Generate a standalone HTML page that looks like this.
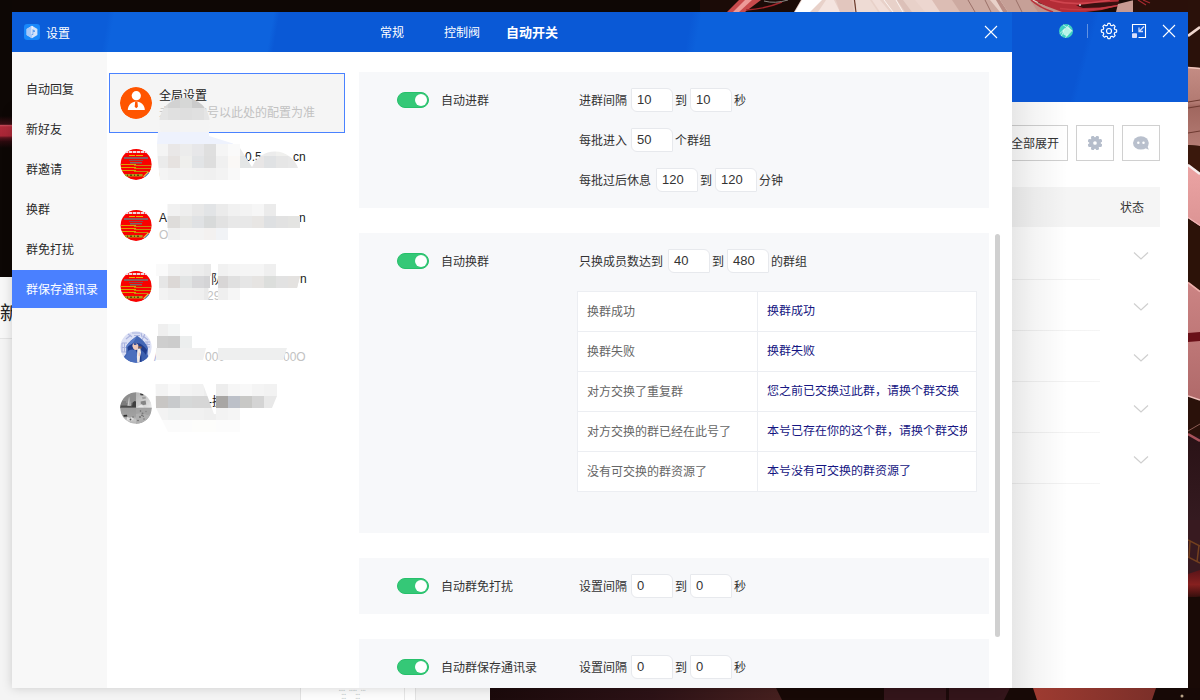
<!DOCTYPE html>
<html lang="zh-CN">
<head>
<meta charset="utf-8">
<title>设置</title>
<style>
*{box-sizing:border-box;margin:0;padding:0}
html,body{width:1200px;height:700px;overflow:hidden}
body{position:relative;background:#150906;font-family:"Liberation Sans","Noto Sans CJK SC",sans-serif;font-size:12px;color:#333;line-height:1}
.abs{position:absolute}
/* ---------- wallpaper ---------- */
#wp-top{left:0;top:0;width:1200px;height:12px;background:#120806}
#wp-right{left:1188px;top:0}
#wp-bottom{left:490px;top:688px;width:710px;height:12px}
#wp-left{left:0;top:0;width:12px;height:277px;background:#0d0705}
/* ---------- back-left window ---------- */
#bl{left:0;top:277px;width:490px;height:423px;background:#f4f4f4}
/* ---------- back main window ---------- */
#bw{left:900px;top:12px;width:288px;height:676px;background:#fff}
#bw .hd{left:0;top:0;width:288px;height:90px;background:linear-gradient(105deg,#0a56d3 0,#0a56d3 62%,#0b5bd8 64%,#0b5bd8 100%)}
.btn{position:absolute;top:113px;height:36px;border:1px solid #d0d0d0;background:#fff}
/* ---------- settings window ---------- */
#sw{left:12px;top:12px;width:1000px;height:676px;background:#fff}
#swsh{left:12px;top:110px;width:985px;height:578px;box-shadow:0 0 10px rgba(0,0,0,.17)}
#sw .tb{left:0;top:0;width:1000px;height:40px;background:linear-gradient(100deg,#0b5dd9 0,#0b5dd9 9.600%,#0d63de 10.200%,#0d63de 26%,#0a59d6 26.600%,#0a59d6 67.500%,#0c61dc 68.500%,#0c61dc 100%);color:#fff}
#side{left:0;top:40px;width:95px;height:636px;background:#f8f8f8}
.si{position:absolute;left:0;width:95px;height:38px;line-height:40px;padding-left:14px;color:#2a2a2a;white-space:nowrap}
.si.on{background:#4a80ff;color:#fff}
.acc{position:absolute;left:97px;width:236px;height:60px}
.acc.on{background:#f5f5f5;border:1px solid #4a82ff}
.av{position:absolute;left:108px;width:32px;height:32px;border-radius:50%;overflow:hidden}
.nm{position:absolute;left:147px;white-space:nowrap;color:#222;line-height:14px;margin-top:1px}
.sb{position:absolute;left:147px;white-space:nowrap;color:#c2c2c2;line-height:14px;margin-top:1px}
.card{position:absolute;left:347px;width:630px;background:#f7f8fa}
.tg{position:absolute;left:385px;width:32px;height:16px;border-radius:8px;background:#35c877;border:1px solid #27c06b}
.tg:after{content:"";position:absolute;right:1px;top:1px;width:12px;height:12px;border-radius:50%;background:#fff}
.lb{position:absolute;left:429px;white-space:nowrap;color:#333;line-height:16px;margin-top:1px}
.tx{position:absolute;white-space:nowrap;color:#333;line-height:16px;margin-top:1px}
.in{position:absolute;width:42px;height:24px;border:1px solid #e7e9ed;border-radius:1px 6px 1px 6px;background:#fff;line-height:22px;padding-left:5px;color:#333;font-size:13px}
#tbl{border-collapse:collapse;background:#fff;table-layout:fixed;width:400px}
#tbl td{height:40px;border:1px solid #eceef2;padding:0 0 0 9px;color:#666;white-space:nowrap;overflow:hidden;vertical-align:middle}
#tbl td:first-child{width:180px}
#tbl td span{display:block;width:200px;overflow:hidden;color:#161682;white-space:nowrap;position:relative;top:-1px}
</style>
</head>
<body>
<!-- wallpaper -->
<svg id="wp-top" class="abs" width="1200" height="12" viewBox="0 0 1200 12">
<rect width="1200" height="12" fill="#0e0705"/>
<rect x="700" width="500" height="12" fill="#1b0b07"/>
<polygon points="727,12 739,0 761,0 745,12" fill="#c94a4c"/>
<polygon points="733,12 745,0 752,0 739,12" fill="#ee9a98"/>
<path d="M746 10 Q765 9 782 2" stroke="#a3262c" stroke-width="1.4" fill="none"/>
<path d="M764 1 Q775 4 788 0" stroke="#8c8884" stroke-width="1" fill="none"/>
<polygon points="794,12 801,0 1040,0 1032,12" fill="#e8d1c9"/>
<polygon points="795,12 802,0 822,0 810,12" fill="#ffffff"/>
<polygon points="818,12 826,0 834,0 840,12" fill="#f4e4df"/>
<polygon points="840,12 836,0 852,0 854,12" fill="#e2c6be"/><path d="M854.500 0L856 12" stroke="#6a3a2c" stroke-width="1.200"/><polygon points="857,12 855.500,0 870,0 878,12" fill="#eedbd4"/>
<polygon points="880,12 872,0 880,0 890,12" fill="#f1ded8"/>
<polygon points="905,12 897,0 903,0 912,12" fill="#dcc0b8"/><path d="M884 0L893 12M896 0L903 12" stroke="#fbf3f0" stroke-width="1"/>
<polygon points="925,12 915,0 935,0 947,12" fill="#ecd6cf"/>
<polygon points="940,12 932,0 955,0 964,12" fill="#dcbdb4"/>
<polygon points="960,12 952,0 990,0 1000,12" fill="#cdaaa1"/><path d="M968 0l7 12M985 0l6 12" stroke="#9a7068" stroke-width="1"/>
<polygon points="1003,12 996,0 1000,0 1008,12" fill="#b98d85"/>
<polygon points="1008,12 1000,0 1032,0 1040,12" fill="#c6a097"/><path d="M1016 0l6 12" stroke="#9a7068" stroke-width="1"/>
<polygon points="1030,0 1066,12 1038,12" fill="#c29289"/>
<polygon points="1034,0 1119,0 1117,6 1102,10 1086,12 1062,12 1046,6" fill="#b32c36"/>
<path d="M1031 0 Q1040 8 1053 12" stroke="#b9323b" stroke-width="1.600" fill="none"/>
<path d="M1050 0 Q1075 7 1110 0" stroke="#cf444e" stroke-width="1.600" fill="none"/>
<polygon points="1076,5.500 1095,3 1119,1.500 1118,5 1100,7.500 1083,8" fill="#3a1010"/>
<path d="M1060 8.500 Q1090 12 1118 5.500" stroke="#c43a44" stroke-width="1.600" fill="none"/>
<circle cx="1080" cy="5" r=".9" fill="#f2e2e2"/>
<polygon points="1116,12 1118,4 1134,0 1134,12" fill="#c79a92"/>
<rect x="1133" width="67" height="12" fill="#2a100a"/>
<path d="M1138 0 L1146 5 M1143 0 L1150 3" stroke="#a52a30" stroke-width="1.2"/>
</svg>
<svg id="wp-right" class="abs" width="12" height="700" viewBox="1188 0 12 700">
<defs>
<linearGradient id="r1" x1="0" y1="0" x2="0" y2="1"><stop offset="0" stop-color="#c48c84"/><stop offset=".45" stop-color="#b27a72"/><stop offset=".5" stop-color="#a0665e"/><stop offset="1" stop-color="#b47c74"/></linearGradient>
<linearGradient id="r2" x1="0" y1="0" x2="0" y2="1"><stop offset="0" stop-color="#eca4a4"/><stop offset="1" stop-color="#dc9494"/></linearGradient>
<linearGradient id="r3" x1="0" y1="0" x2="0" y2="1"><stop offset="0" stop-color="#cc8484"/><stop offset="1" stop-color="#b06a6a"/></linearGradient>
<linearGradient id="r4" x1="0" y1="0" x2="0" y2="1"><stop offset="0" stop-color="#2a1216"/><stop offset="1" stop-color="#361c22"/></linearGradient>
<linearGradient id="r5" x1="0" y1="0" x2="0" y2="1"><stop offset="0" stop-color="#5a1418"/><stop offset=".5" stop-color="#86201f"/><stop offset="1" stop-color="#2a0c0a"/></linearGradient>
</defs>
<rect x="1188" y="0" width="12" height="700" fill="#2a110a"/>
<path d="M1188 36L1200 27" stroke="#efd6ce" stroke-width="2.600"/>
<polygon points="1188,67 1200,68 1200,146 1188,145" fill="url(#r1)"/>
<path d="M1188 67.500L1200 68.500" stroke="#f0c4bc" stroke-width="1.400"/>
<path d="M1188 102L1200 100M1188 108L1200 106M1188 133L1200 131" stroke="#6e3a30" stroke-width="1"/>
<polygon points="1188,145 1200,146 1200,173 1188,164" fill="#3a180c"/>
<polygon points="1188,164 1200,173 1200,226 1188,218" fill="url(#r2)"/>
<path d="M1188 165L1200 174" stroke="#f6eeee" stroke-width="2.400"/>
<path d="M1188 217.500L1200 225.500" stroke="#f0b4b4" stroke-width="1.400"/>
<polygon points="1188,219 1200,227 1200,291 1188,282" fill="#2c1208"/>
<polygon points="1188,282 1200,291 1200,400 1188,396" fill="url(#r3)"/>
<path d="M1188 282.500L1200 291.500" stroke="#eeb0ac" stroke-width="1.600"/>
<polygon points="1188,333 1200,332 1200,341 1188,342" fill="#6a1018"/>
<path d="M1188 396L1200 400" stroke="#f0c0bc" stroke-width="1.600"/>
<rect x="1188" y="436" width="12" height="100" fill="url(#r4)"/>
<path d="M1188 431L1200 424" stroke="#8c5c54" stroke-width="1"/>
<path d="M1188 434L1200 441" stroke="#a8525a" stroke-width="2.400"/>
<rect x="1188" y="520" width="12" height="54" fill="#381a20"/>
<path d="M1188 540L1200 546M1188 557L1200 563M1190 541L1189 558M1199 545L1197 562" stroke="#74401f" stroke-width="1.500"/>
<polygon points="1188,574 1200,570 1200,596 1188,599" fill="url(#r5)"/>
<rect x="1188" y="597" width="12" height="103" fill="#190a06"/>
</svg>
<svg id="wp-bottom" class="abs" width="710" height="12" viewBox="490 688 710 12">
<defs><linearGradient id="gb1" x1="0" x2="1"><stop offset="0" stop-color="#1b0a0b"/><stop offset=".55" stop-color="#2c1216"/><stop offset="1" stop-color="#46201f"/></linearGradient>
<linearGradient id="gb2" x1="0" x2="1"><stop offset="0" stop-color="#9e3b31"/><stop offset="1" stop-color="#7b2f29"/></linearGradient></defs>
<rect x="490" y="688" width="710" height="12" fill="#170906"/>
<polygon points="490,688 776,688 782,700 490,700" fill="url(#gb1)"/>
<polygon points="884,688 1010,688 1004,700 884,700" fill="#33151a"/>
<rect x="946" y="688" width="3" height="12" fill="#1c0a0a"/>
<polygon points="1033,688 1156,688 1152,700 1037,700" fill="url(#gb2)"/>
<circle cx="1182" cy="696" r="1.5" fill="#b9a488"/>
</svg>
<div id="wp-left" class="abs"><div class="abs" style="left:0;top:116px;width:12px;height:32px;background:linear-gradient(#0d0705,#3a0e14 26%,#c44a58 29%,#b02a3a 34%,#a82636 62%,#5a141e 68%,#2a0a0e 80%,#0d0705)"></div></div>
<!-- back-left window -->
<div id="bl" class="abs">
<div class="abs" style="left:0;top:0;width:12px;height:62px;background:#f7f7f7"></div>
<div class="abs" style="left:0;top:61px;width:12px;height:1px;background:#e3e3e3"></div>
<div class="abs" style="left:0;top:26px;font-size:19px;line-height:22px;color:#222;width:12px;overflow:hidden;white-space:nowrap">新建</div>
<div class="abs" style="left:300px;top:411px;width:116px;height:12px;background:#fcfcfc;border-left:1px solid #e2e2e2;border-right:1px solid #e2e2e2"></div>
<div class="abs" style="left:404px;top:411px;width:1px;height:12px;background:#e6e6e6"></div>
<div class="abs" style="left:339px;top:411px;font-size:3px;line-height:4px;color:#9aa;white-space:pre;letter-spacing:.5px">▪▪▪▪   ▪▪▪▪▪   ▪▪▪
  ▪▪▪       ▪▪▪
  ▪▪▪       ▪▪▪</div>
</div>
<!-- back main window -->
<div id="bw" class="abs">
<div class="hd abs"></div>
<!-- header icons -->
<svg class="abs" style="left:158px;top:11px" width="16" height="16" viewBox="0 0 16 16"><circle cx="8" cy="8" r="7" fill="#3fcfc1"/><polygon points="4.500,7.500 10.500,3.500 14,8 9,13.500 5.500,11.500" fill="#b6f3e7"/><path d="M1.800 10.500L11 2.200M5 1.800L14.500 8M3.500 13L6.500 5.500M7.500 14.800L9.500 11" stroke="#e2fbf5" stroke-width=".8" fill="none" opacity=".9"/></svg>
<div class="abs" style="left:187px;top:12px;width:1px;height:14px;background:rgba(255,255,255,.36)"></div>
<svg class="abs" style="left:200px;top:10px" width="18" height="18" viewBox="0 0 18 18" fill="none" stroke="#fff" stroke-width="1.150" stroke-linejoin="round"><path d="M7.450 3.200 L7.930 1.370 L10.070 1.370 L10.550 3.200 L12 3.800 L13.630 2.850 L15.150 4.370 L14.200 6 L14.800 7.450 L16.630 7.930 L16.630 10.070 L14.800 10.550 L14.200 12 L15.150 13.630 L13.630 15.150 L12 14.200 L10.550 14.800 L10.070 16.630 L7.930 16.630 L7.450 14.800 L6 14.200 L4.370 15.150 L2.850 13.630 L3.800 12 L3.200 10.550 L1.370 10.070 L1.370 7.930 L3.200 7.450 L3.800 6 L2.850 4.370 L4.370 2.850 L6 3.800Z"/><circle cx="9" cy="9" r="2.500"/></svg>
<svg class="abs" style="left:231px;top:11px" width="16" height="16" viewBox="0 0 16 16" fill="none" stroke="#fff" stroke-width="1.100"><path d="M1.500 9V1.500h13v13H7.500"/><path d="M13 3.500L8.500 8M8 4.500v4h4" stroke="#d3dcfb" stroke-width="1.300"/><rect x="1" y="10.200" width="5" height="4.800" fill="#d9defb" stroke="none" rx=".8"/></svg>
<svg class="abs" style="left:262px;top:12px" width="14" height="14" viewBox="0 0 14 14" stroke="#fff" stroke-width="1.100"><path d="M1 1l12 12M13 1L1 13"/></svg>
<!-- toolbar buttons -->
<div class="btn" style="left:92px;width:76px;line-height:36px;padding-left:18px;color:#333;white-space:nowrap">全部展开</div>
<div class="btn" style="left:176px;width:38px"><svg class="abs" style="left:11px;top:10px" width="14" height="14" viewBox="0 0 16 16"><path fill="#b5bdcb" stroke="#b5bdcb" stroke-width="1.200" stroke-linejoin="round" d="M8.89 2.07 L9.98 0.35 L12.01 1.19 L11.57 3.18 L12.82 4.43 L14.81 3.99 L15.65 6.02 L13.93 7.11 L13.93 8.89 L15.65 9.98 L14.81 12.01 L12.82 11.57 L11.57 12.82 L12.01 14.81 L9.98 15.65 L8.89 13.93 L7.11 13.93 L6.02 15.65 L3.99 14.81 L4.43 12.82 L3.18 11.57 L1.19 12.01 L0.35 9.98 L2.07 8.89 L2.07 7.11 L0.35 6.02 L1.19 3.99 L3.18 4.43 L4.43 3.18 L3.99 1.19 L6.02 0.35 L7.11 2.07Z"/><circle cx="8" cy="8" r="2.100" fill="#fff"/></svg></div>
<div class="btn" style="left:222px;width:38px"><svg class="abs" style="left:9px;top:9px" width="18" height="16" viewBox="0 0 18 16"><ellipse cx="8.900" cy="7.900" rx="7.900" ry="6.700" fill="#b9c0cd"/><path fill="#b9c0cd" d="M12 12.500l4.800 2.300-1.600-4.300z"/><circle cx="6.300" cy="7.800" r="1.250" fill="#fff"/><circle cx="11.500" cy="7.800" r="1.250" fill="#fff"/></svg></div>
<!-- table -->
<div class="abs" style="left:112px;top:175px;width:148px;height:40px;background:#f5f5f5"></div>
<div class="abs" style="left:220px;top:189px;line-height:14px;color:#333">状态</div>
<div class="abs" style="left:112px;top:267px;width:88px;height:1px;background:linear-gradient(to right,#efefef,#f5f5f5)"></div>
<div class="abs" style="left:112px;top:318px;width:88px;height:1px;background:linear-gradient(to right,#efefef,#f5f5f5)"></div>
<div class="abs" style="left:112px;top:369px;width:88px;height:1px;background:linear-gradient(to right,#efefef,#f5f5f5)"></div>
<div class="abs" style="left:112px;top:420px;width:88px;height:1px;background:linear-gradient(to right,#efefef,#f5f5f5)"></div>
<div class="abs" style="left:112px;top:471px;width:88px;height:1px;background:linear-gradient(to right,#efefef,#f5f5f5)"></div>
<svg class="abs" style="left:233px;top:239px" width="16" height="220" viewBox="0 0 16 220" fill="none" stroke="#cfcfcf" stroke-width="1.200"><path d="M1 1.500l7 6.500 7-6.500M1 52.500l7 6.500 7-6.500M1 103.500l7 6.500 7-6.500M1 154.500l7 6.500 7-6.500M1 205.500l7 6.500 7-6.500"/></svg>
<div class="abs" style="left:112px;top:90px;width:56px;height:586px;background:linear-gradient(to right,rgba(0,0,0,.095),rgba(0,0,0,.045) 40%,rgba(0,0,0,0))"></div>
</div>
<!-- settings window -->
<div id="swsh" class="abs"></div>
<div id="sw" class="abs" style="overflow:hidden">
<div class="tb abs">
<svg class="abs" style="left:12px;top:12px" width="16" height="16" viewBox="0 0 16 16"><rect width="16" height="16" rx="3.200" fill="#1889fb"/><polygon points="8,1.800 13.400,4.900 13.400,11.100 8,14.200 2.600,11.100 2.600,4.900" fill="#d3e4fb"/><polygon points="8,1.800 8,14.200 2.600,11.100 2.600,4.900" fill="#a9c9f7"/><polygon points="8,5 11,6.500 11,8 9.300,8 9.300,10.500 8,11.200" fill="#5f9ff0"/><path d="M8 2v8" stroke="#fff" stroke-width=".9"/></svg>
<div class="abs" style="left:34px;top:14px;line-height:16px;white-space:nowrap">设置</div>
<div class="abs" style="left:368px;top:13px;line-height:16px;white-space:nowrap">常规</div>
<div class="abs" style="left:432px;top:13px;line-height:16px;white-space:nowrap">控制阀</div>
<div class="abs" style="left:494px;top:13px;line-height:16px;white-space:nowrap;font-size:13px;font-weight:bold">自动开关</div>
<svg class="abs" style="left:972px;top:13px" width="14" height="14" viewBox="0 0 14 14" stroke="#fff" stroke-width="1.100"><path d="M1 1l12 12M13 1L1 13"/></svg>
</div>
<div id="side" class="abs">
<div class="si" style="top:18px">自动回复</div>
<div class="si" style="top:58px">新好友</div>
<div class="si" style="top:98px">群邀请</div>
<div class="si" style="top:138px">换群</div>
<div class="si" style="top:178px">群免打扰</div>
<div class="si on" style="top:218px">群保存通讯录</div>
</div>
<!-- account list -->
<div class="acc on" style="top:61px"></div>
<svg class="av" style="top:75px" width="32" height="32" viewBox="0 0 32 32"><circle cx="16" cy="16" r="16" fill="#ff5500"/><circle cx="16.300" cy="8.700" r="4.600" fill="#fff"/><path d="M7.800 23c0-5 3.800-8.600 8.500-8.600s8.500 3.600 8.500 8.600z" fill="#fff"/><path d="M15.200 14.400h2.200l.5 5.300-1.600 1.500-1.600-1.500z" fill="#ff5500"/></svg>
<div class="nm" style="top:76px">全局设置</div>
<div class="sb" style="top:93px">未设置的号以此处的配置为准</div>

<svg class="av" style="top:136px" width="32" height="32" viewBox="0 0 32 32"><use href="#redav"/></svg>
<div class="nm" style="top:136.500px;left:233px">0.5</div><div class="nm" style="top:136.500px;left:281px">cn</div>
<div class="sb" style="top:154px">C</div>

<svg class="av" style="top:197px" width="32" height="32" viewBox="0 0 32 32"><defs><g id="redav"><circle cx="16.100" cy="16.400" r="15.500" fill="#f90000"/><rect x="5" y="3" width="22" height="2" fill="#efd9e2"/><rect x="8" y="3" width="1" height="2" fill="#f95050"/><rect x="12" y="3" width="1" height="2" fill="#f95050"/><rect x="16" y="3" width="1" height="2" fill="#f95050"/><rect x="20" y="3" width="1" height="2" fill="#f95050"/><rect x="24" y="3" width="1" height="2" fill="#f95050"/><rect x="9" y="7" width="14" height="1" fill="#e9b000"/><rect x="15" y="7" width="1" height="1" fill="#f90000"/><rect x="4" y="9" width="24" height="2" fill="#8a5a5e"/><rect x="9" y="12" width="14" height="1" fill="#8c4a4e"/><rect x="10" y="14" width="12" height="1.500" fill="#77686c"/><rect x="1" y="16" width="15" height="1" fill="#d8a200"/><rect x="14" y="17" width="17" height="1" fill="#c3870c"/><rect x="1" y="19" width="15" height="1" fill="#d8a200"/><rect x="14" y="20" width="17" height="1" fill="#c3870c"/><rect x="2" y="22" width="14" height="1" fill="#d8a200"/><rect x="14" y="23" width="14" height="1" fill="#c3870c"/><rect x="5" y="26" width="17.600" height="2.500" fill="#b09a18"/><rect x="7" y="26.500" width="1" height="1.500" fill="#5a4a10"/><rect x="10" y="26.500" width="2" height="1.500" fill="#5a4a10"/><rect x="14" y="26.500" width="1" height="1.500" fill="#5a4a10"/><rect x="17" y="26.500" width="2" height="1.500" fill="#5a4a10"/><path d="M24 29 L29 24 L29 26 L25.500 29.500 Z" fill="#3a96e4"/><path d="M23 28.500 L28 23.500 L29 24 L24 29 Z" fill="#e8d040"/></g></defs><use href="#redav"/></svg>
<div class="nm" style="top:197.500px">A</div><div class="nm" style="top:197.500px;left:287px">n</div>
<div class="sb" style="top:214.500px">O</div>

<svg class="av" style="top:258px" width="32" height="32" viewBox="0 0 32 32"><use href="#redav"/></svg>
<div class="nm" style="top:260px;left:199px">队</div><div class="nm" style="top:258.500px;left:288px">n</div>
<div class="sb" style="top:275.500px;left:195px">29</div>

<svg class="av" style="top:319px" width="32" height="32" viewBox="0 0 32 32"><defs><clipPath id="cb"><circle cx="16" cy="16" r="15.700"/></clipPath></defs><g clip-path="url(#cb)"><rect width="32" height="32" fill="#dde1f5"/><path d="M2 12h5M2 12v9h5M4.500 12v9M2 16.500h5M8 3l4 3M6 8l5-4M12 2h8M14 4.500h6M21 2l1 4M23 5l5 4M25 3l-3 6M25 11h5M25 13.500h5M27 11v8M24 16h6" stroke="#aab3de" stroke-width="1.100" fill="none"/><path d="M17.100 4.800C21 7.500 26.500 12 28 17.500L27.500 23l3 9H4l-1-5 3.200-4.500L6.300 15C9 11 13.500 7.500 17.100 4.800z" fill="#4467b5"/><path d="M17.100 4.800C15 9 12.500 12.500 10.500 15l-3 1.500L6.300 15C9 11 13.500 7.500 17.100 4.800z" fill="#5b7dc9"/><path d="M7.600 16c2-2 4.500-3.500 7-4l5 .5c3 1.500 6 4 7.500 6.500l-1.500 6-5 7-3-1.500-1-8-5-2.500-3 3z" fill="#203c8c"/><path d="M8.500 19.500c2-1.200 5-1.500 7-.5l1.500 3 .5 10H7l-2-4z" fill="#4c6fbd"/><path d="M21 19c2 1 4.500 3.500 5.500 6l1 7h-6z" fill="#3c5fae"/><path d="M13 12.600c1.500-.5 3.500-.3 5 .8l.6 2.500-1 2.800-2.800.4-1.500-1.600-1-2.500z" fill="#efc9ba"/><path d="M13.300 12.600l2-.6 1.500 1.800-2.500.2z" fill="#2b4796"/><path d="M18.300 15.200l3.400.2-.2 2-3 .2z" fill="#8a5c44"/><path d="M17.400 17.800l3-.3.600 4-1 4.500-.5 5.500-2.300.3-.3-6z" fill="#f3ebe6"/><path d="M18.800 21l1.500 1.500-.5 3-1.200-.5z" fill="#efc9ba"/></g></svg>
<div class="sb" style="top:336.500px;left:142px;color:#a9b0d6">/</div><div class="sb" style="top:336.500px;left:193px">000</div><div class="sb" style="top:336.500px;left:271px">00O</div>

<svg class="av" style="top:380px" width="32" height="32" viewBox="0 0 32 32"><defs><clipPath id="cg"><circle cx="16" cy="16" r="15.800"/></clipPath><linearGradient id="gtr" x1="0" y1="0" x2="1" y2="1"><stop offset="0" stop-color="#b4b4b4"/><stop offset=".6" stop-color="#d2d2d2"/><stop offset="1" stop-color="#ececec"/></linearGradient><linearGradient id="gbl" x1="0" y1="0" x2="0" y2="1"><stop offset="0" stop-color="#9a9a9a"/><stop offset=".55" stop-color="#a2a2a2"/><stop offset=".75" stop-color="#c6c6c6"/><stop offset="1" stop-color="#b0b0b0"/></linearGradient></defs><g clip-path="url(#cg)"><rect width="16" height="16" fill="#8e8e8e"/><rect y="11" width="16" height="3" fill="#7a7a7a"/><rect y="13.600" width="16" height="2.400" fill="#4c4c4c"/><path d="M9.100 4.600L7.400 13.800h3.500z" fill="#c9c9c9"/><path d="M9.100 4.600L9 13.800h1.900z" fill="#a8a8a8"/><path d="M12.600 10.500l2-1.500 1.400.5V15h-4z" fill="#3e3e3e"/><path d="M2 9h4v4H2z" fill="#7c7c7c"/><rect x="16" width="16" height="16" fill="url(#gtr)"/><path d="M20 1.500l3 .3.500 1.800-3-.4z" fill="#3e3e3e"/><path d="M20.600 9.500l5-1 .6 4-5.200 1z" fill="#858585"/><path d="M22 5l3.500-.5.500 2-3.500.8z" fill="#a0a0a0"/><path d="M16 16l6-4 2 4z" fill="#e6e6e6"/><rect y="16" width="16" height="16" fill="url(#gbl)"/><path d="M3.400 23l3.600-.2.300 1.800-3.500.2z" fill="#2e2e2e"/><path d="M7 25l3 1 2-1 2 2-3 2-4-1z" fill="#dcdcdc"/><circle cx="10.500" cy="27.500" r=".9" fill="#555"/><circle cx="13" cy="25" r=".7" fill="#666"/><rect x="16" y="16" width="16" height="16" fill="#a3a3a3"/><path d="M16 22l6-1 5 2 5-1v10H16z" fill="#afafaf"/><circle cx="20.500" cy="19" r=".8" fill="#6a6a6a"/><circle cx="22.500" cy="21.500" r="1" fill="#777"/><circle cx="26" cy="19.500" r=".7" fill="#808080"/><circle cx="20" cy="25" r=".9" fill="#6e6e6e"/><circle cx="24" cy="27" r=".8" fill="#787878"/><circle cx="18" cy="28.500" r=".8" fill="#666"/><path d="M21 23l3 1.500" stroke="#6a6a6a" stroke-width="1"/><rect x="0" y="15.700" width="32" height=".6" fill="#9c9c9c"/></g></svg>
<div class="nm" style="top:382px;left:196px">-换</div>
<!-- mosaic -->
<svg class="abs" style="left:0;top:0" width="360" height="676" viewBox="12 12 360 676" id="mosaic">
<defs><clipPath id="c1"><circle cx="184.5" cy="123" r="25.3"/></clipPath><clipPath id="c2"><path d="M240 148 L252 167 A24.5 24.5 0 0 1 298 168 L240 168 Z"/></clipPath><clipPath id="c3"><path d="M157 144 Q157 156 160 180 L240 180 L240 144 Z"/></clipPath><clipPath id="c6"><path d="M155.5 384 L203 384 L214 414 L216 414 L216 384 L277 384 L277 396 L272 408 L240 408 L240 432 L168 432 L156 408 Z"/></clipPath></defs>
<g clip-path="url(#c1)">
<rect x="156" y="96" width="12" height="12" fill="#d9d9d9"/>
<rect x="168" y="96" width="12" height="12" fill="#d2d2d2"/>
<rect x="180" y="96" width="12" height="12" fill="#d6d7d6"/>
<rect x="192" y="96" width="12" height="12" fill="#cbcbcb"/>
<rect x="204" y="96" width="12" height="12" fill="#d6d6d6"/>
<rect x="156" y="108" width="12" height="12" fill="#e4e4e4"/>
<rect x="168" y="108" width="12" height="12" fill="#e0e0e0"/>
<rect x="180" y="108" width="12" height="12" fill="#dedede"/>
<rect x="192" y="108" width="12" height="12" fill="#e0e0e0"/>
<rect x="204" y="108" width="12" height="12" fill="#e5e5e5"/>
<rect x="156" y="120" width="12" height="12" fill="#f3f3f3"/>
<rect x="168" y="120" width="12" height="12" fill="#f3f3f3"/>
<rect x="180" y="120" width="12" height="12" fill="#f4f4f4"/>
<rect x="192" y="120" width="12" height="12" fill="#f4f4f4"/>
<rect x="204" y="120" width="12" height="12" fill="#f4f4f4"/>
</g>
<path d="M158 132 L209 132 L209 136 L233 143.5 L233 144 L157 144 Z" fill="#eef2fd"/>
<g clip-path="url(#c3)">
<rect x="156" y="144" width="12" height="12" fill="#f4f4f4"/>
<rect x="168" y="144" width="12" height="12" fill="#e9e7e7"/>
<rect x="180" y="144" width="12" height="12" fill="#ececec"/>
<rect x="192" y="144" width="12" height="12" fill="#e7e7e9"/>
<rect x="204" y="144" width="12" height="12" fill="#dfdfdf"/>
<rect x="216" y="144" width="12" height="12" fill="#f5f5f5"/>
<rect x="228" y="144" width="12" height="12" fill="#fafafa"/>
<rect x="156" y="156" width="12" height="12" fill="#ebebeb"/>
<rect x="168" y="156" width="12" height="12" fill="#e6e2e0"/>
<rect x="180" y="156" width="12" height="12" fill="#efefed"/>
<rect x="192" y="156" width="12" height="12" fill="#e2e4e6"/>
<rect x="204" y="156" width="12" height="12" fill="#dedede"/>
<rect x="216" y="156" width="12" height="12" fill="#f0f0f0"/>
<rect x="228" y="156" width="12" height="12" fill="#faf8f6"/>
<rect x="156" y="168" width="12" height="12" fill="#f4f4f4"/>
<rect x="168" y="168" width="12" height="12" fill="#f1f1f1"/>
<rect x="180" y="168" width="12" height="12" fill="#f2f2f2"/>
<rect x="192" y="168" width="12" height="12" fill="#f1f1f1"/>
<rect x="204" y="168" width="12" height="12" fill="#f0f0f0"/>
<rect x="216" y="168" width="12" height="12" fill="#f3f3f3"/>
<rect x="228" y="168" width="12" height="12" fill="#f9f9f9"/>
</g>
<g clip-path="url(#c2)">
<rect x="240" y="144" width="12" height="12" fill="#ebebeb"/>
<rect x="252" y="144" width="12" height="12" fill="#eeeeee"/>
<rect x="264" y="144" width="12" height="12" fill="#ececec"/>
<rect x="276" y="144" width="12" height="12" fill="#f0f0ee"/>
<rect x="288" y="144" width="12" height="12" fill="#f0f0f0"/>
<rect x="240" y="156" width="12" height="12" fill="#e4e6e6"/>
<rect x="252" y="156" width="12" height="12" fill="#e8e6e6"/>
<rect x="264" y="156" width="12" height="12" fill="#e0e2e4"/>
<rect x="276" y="156" width="12" height="12" fill="#e6e6e6"/>
<rect x="288" y="156" width="12" height="12" fill="#e8e8e8"/>
</g>
<rect x="167.5" y="204" width="12.5" height="12" fill="#f1f1f1"/>
<rect x="180" y="204" width="12" height="12" fill="#eeeeee"/>
<rect x="192" y="204" width="12" height="12" fill="#e8e8e8"/>
<rect x="204" y="204" width="12" height="12" fill="#e2e4e6"/>
<rect x="216" y="204" width="12" height="12" fill="#ebebeb"/>
<rect x="228" y="204" width="12" height="12" fill="#f1f1f1"/>
<rect x="240" y="204" width="12" height="12" fill="#f3f3f3"/>
<rect x="252" y="204" width="12" height="12" fill="#f6f6f6"/>
<rect x="264" y="204" width="12" height="12" fill="#ebebeb"/>
<rect x="167.5" y="216" width="12.5" height="12" fill="#dedcda"/>
<rect x="180" y="216" width="12" height="12" fill="#e6e6e4"/>
<rect x="192" y="216" width="12" height="12" fill="#e0e2e4"/>
<rect x="204" y="216" width="12" height="12" fill="#d8dada"/>
<rect x="216" y="216" width="12" height="12" fill="#e2e2e2"/>
<rect x="228" y="216" width="12" height="12" fill="#e8e8e8"/>
<rect x="240" y="216" width="12" height="12" fill="#e8e8e8"/>
<rect x="252" y="216" width="12" height="12" fill="#e8e6e4"/>
<rect x="264" y="216" width="12" height="12" fill="#dee0e2"/>
<rect x="276" y="216" width="12" height="12" fill="#e2e2e2"/>
<rect x="288" y="216" width="12" height="12" fill="#e4e4e2"/>
<rect x="168" y="228" width="12" height="12" fill="#f0f0f0"/>
<rect x="180" y="228" width="12" height="12" fill="#f3f3f3"/>
<rect x="192" y="228" width="12" height="12" fill="#f3f3f3"/>
<rect x="204" y="228" width="12" height="12" fill="#f3f1f0"/>
<rect x="216" y="228" width="12" height="12" fill="#f1f3f6"/>
<rect x="156" y="264" width="12" height="12" fill="#fafafa"/>
<rect x="168" y="264" width="12" height="12" fill="#f1f1f1"/>
<rect x="180" y="264" width="12" height="12" fill="#efefef"/>
<rect x="192" y="264" width="12" height="12" fill="#ededed"/>
<rect x="204" y="264" width="7" height="12" fill="#e9e9e9"/>
<rect x="159" y="276" width="9" height="12" fill="#e6e6e6"/>
<rect x="168" y="276" width="12" height="12" fill="#dcd8d6"/>
<rect x="180" y="276" width="12" height="12" fill="#e2e4e4"/>
<rect x="192" y="276" width="12" height="12" fill="#d8d8da"/>
<rect x="204" y="276" width="6" height="12" fill="#d4d4d6"/>
<rect x="159" y="288" width="9" height="12" fill="#f3f3f3"/>
<rect x="168" y="288" width="12" height="12" fill="#efefef"/>
<rect x="180" y="288" width="12" height="12" fill="#f0f0f0"/>
<rect x="192" y="288" width="12" height="12" fill="#efefef"/>
<rect x="204" y="288" width="4.5" height="12" fill="#e9e9e9"/>
<rect x="218" y="264" width="10" height="12" fill="#f1f1f1"/>
<rect x="228" y="264" width="12" height="12" fill="#f4f4f4"/>
<rect x="240" y="264" width="12" height="12" fill="#f5f5f5"/>
<rect x="252" y="264" width="12" height="12" fill="#f5f5f5"/>
<rect x="264" y="264" width="12" height="12" fill="#efefef"/>
<path d="M218 276 L300 276 L297 288 L218 288 Z" fill="#e2e2e2"/>
<rect x="218" y="276" width="10" height="12" fill="#d8d6d6"/>
<rect x="228" y="276" width="12" height="12" fill="#e0e0e0"/>
<rect x="240" y="276" width="12" height="12" fill="#e6e6e6"/>
<rect x="252" y="276" width="12" height="12" fill="#e6e4e2"/>
<rect x="264" y="276" width="12" height="12" fill="#dcdedc"/>
<rect x="276" y="276" width="12" height="12" fill="#e2e2e2"/>
<rect x="288" y="276" width="9" height="12" fill="#e4e2e0"/>
<path d="M297 276 L300 276 L297 288 Z" fill="#e4e2e0"/>
<rect x="218" y="288" width="10" height="12" fill="#efefef"/>
<rect x="228" y="288" width="12" height="12" fill="#f6f6f6"/>
<rect x="158" y="324" width="10" height="12" fill="#efefef"/>
<rect x="168" y="324" width="12" height="12" fill="#f3f5f5"/>
<rect x="157" y="336" width="11" height="12" fill="#cecece"/>
<rect x="168" y="336" width="12" height="12" fill="#cccccc"/>
<rect x="180" y="336" width="12" height="12" fill="#eceeee"/>
<path d="M156 348 L206 348 L203 360 L156 360 Z" fill="#f0f0f0"/>
<path d="M218 348 L287 348 L283 360 L218 360 Z" fill="#eeefef"/>
<g clip-path="url(#c6)">
<rect x="155" y="384" width="13" height="12" fill="#f3f3f3"/>
<rect x="168" y="384" width="12" height="12" fill="#f9f9f9"/>
<rect x="180" y="384" width="12" height="12" fill="#f3f3f3"/>
<rect x="192" y="384" width="12" height="12" fill="#f1f1f1"/>
<rect x="204" y="384" width="12" height="12" fill="#ededed"/>
<rect x="216" y="384" width="12" height="12" fill="#ededed"/>
<rect x="228" y="384" width="12" height="12" fill="#f6f6f6"/>
<rect x="240" y="384" width="12" height="12" fill="#f8f8f8"/>
<rect x="252" y="384" width="12" height="12" fill="#f4f4f4"/>
<rect x="264" y="384" width="13" height="12" fill="#f2f2f2"/>
<rect x="155" y="396" width="13" height="12" fill="#c8c6c4"/>
<rect x="168" y="396" width="12" height="12" fill="#c8cacc"/>
<rect x="180" y="396" width="12" height="12" fill="#d6d8d8"/>
<rect x="192" y="396" width="12" height="12" fill="#d6d6d6"/>
<rect x="204" y="396" width="12" height="12" fill="#d6d6d6"/>
<rect x="216" y="396" width="12" height="12" fill="#a8a6a4"/>
<rect x="228" y="396" width="12" height="12" fill="#bcc0c8"/>
<rect x="240" y="396" width="12" height="12" fill="#c8c8c6"/>
<rect x="252" y="396" width="12" height="12" fill="#d4d4d4"/>
<rect x="264" y="396" width="13" height="12" fill="#e8e8e8"/>
<rect x="155" y="408" width="13" height="12" fill="#f3f3f3"/>
<rect x="168" y="408" width="12" height="12" fill="#eff1f1"/>
<rect x="180" y="408" width="12" height="12" fill="#f1f1f1"/>
<rect x="192" y="408" width="12" height="12" fill="#f1f1f1"/>
<rect x="204" y="408" width="12" height="12" fill="#efefef"/>
<rect x="216" y="408" width="12" height="12" fill="#f3f3f3"/>
<rect x="228" y="408" width="12" height="12" fill="#f5f5f5"/>
<rect x="155" y="420" width="13" height="12" fill="#fbfbfb"/>
<rect x="168" y="420" width="12" height="12" fill="#fbfbfb"/>
<rect x="180" y="420" width="12" height="12" fill="#fcfcfc"/>
<rect x="192" y="420" width="12" height="12" fill="#fdfdfb"/>
<rect x="204" y="420" width="12" height="12" fill="#fdfdfb"/>
<rect x="216" y="420" width="12" height="12" fill="#fcfcfc"/>
<rect x="228" y="420" width="12" height="12" fill="#fcfcfc"/>
</g>
</svg>
<!-- cards -->
<div class="card" style="top:60px;height:136px"></div>
<div class="tg" style="top:80px"></div><div class="lb" style="top:80px">自动进群</div>
<div class="tx" style="left:567px;top:80px">进群间隔</div><div class="in" style="left:619px;top:76px">10</div><div class="tx" style="left:663px;top:80px">到</div><div class="in" style="left:678px;top:76px">10</div><div class="tx" style="left:722px;top:80px">秒</div>
<div class="tx" style="left:567px;top:120px">每批进入</div><div class="in" style="left:619px;top:116px">50</div><div class="tx" style="left:663px;top:120px">个群组</div>
<div class="tx" style="left:567px;top:160px">每批过后休息</div><div class="in" style="left:644px;top:156px">120</div><div class="tx" style="left:688px;top:160px">到</div><div class="in" style="left:703px;top:156px">120</div><div class="tx" style="left:747px;top:160px">分钟</div>

<div class="card" style="top:221px;height:300px"></div>
<div class="tg" style="top:241px"></div><div class="lb" style="top:241px">自动换群</div>
<div class="tx" style="left:567px;top:241px">只换成员数达到</div><div class="in" style="left:656px;top:237px">40</div><div class="tx" style="left:700px;top:241px">到</div><div class="in" style="left:715px;top:237px">480</div><div class="tx" style="left:759px;top:241px">的群组</div>
<table class="abs" id="tbl" style="left:565px;top:279px">
<tr><td>换群成功</td><td><span>换群成功</span></td></tr>
<tr><td>换群失败</td><td><span>换群失败</span></td></tr>
<tr><td>对方交换了重复群</td><td><span>您之前已交换过此群，请换个群交换</span></td></tr>
<tr><td>对方交换的群已经在此号了</td><td><span>本号已存在你的这个群，请换个群交换</span></td></tr>
<tr><td>没有可交换的群资源了</td><td><span>本号没有可交换的群资源了</span></td></tr>
</table>

<div class="card" style="top:546px;height:56px"></div>
<div class="tg" style="top:566px"></div><div class="lb" style="top:566px">自动群免打扰</div>
<div class="tx" style="left:567px;top:566px">设置间隔</div><div class="in" style="left:619px;top:562px">0</div><div class="tx" style="left:663px;top:566px">到</div><div class="in" style="left:678px;top:562px">0</div><div class="tx" style="left:722px;top:566px">秒</div>

<div class="card" style="top:627px;height:56px"></div>
<div class="tg" style="top:647px"></div><div class="lb" style="top:647px">自动群保存通讯录</div>
<div class="tx" style="left:567px;top:647px">设置间隔</div><div class="in" style="left:619px;top:643px">0</div><div class="tx" style="left:663px;top:647px">到</div><div class="in" style="left:678px;top:643px">0</div><div class="tx" style="left:722px;top:647px">秒</div>
<!-- scrollbar -->
<div class="abs" style="left:983px;top:222px;width:5px;height:403px;border-radius:2.500px;background:#d0d0d0"></div>
</div>
</body>
</html>
